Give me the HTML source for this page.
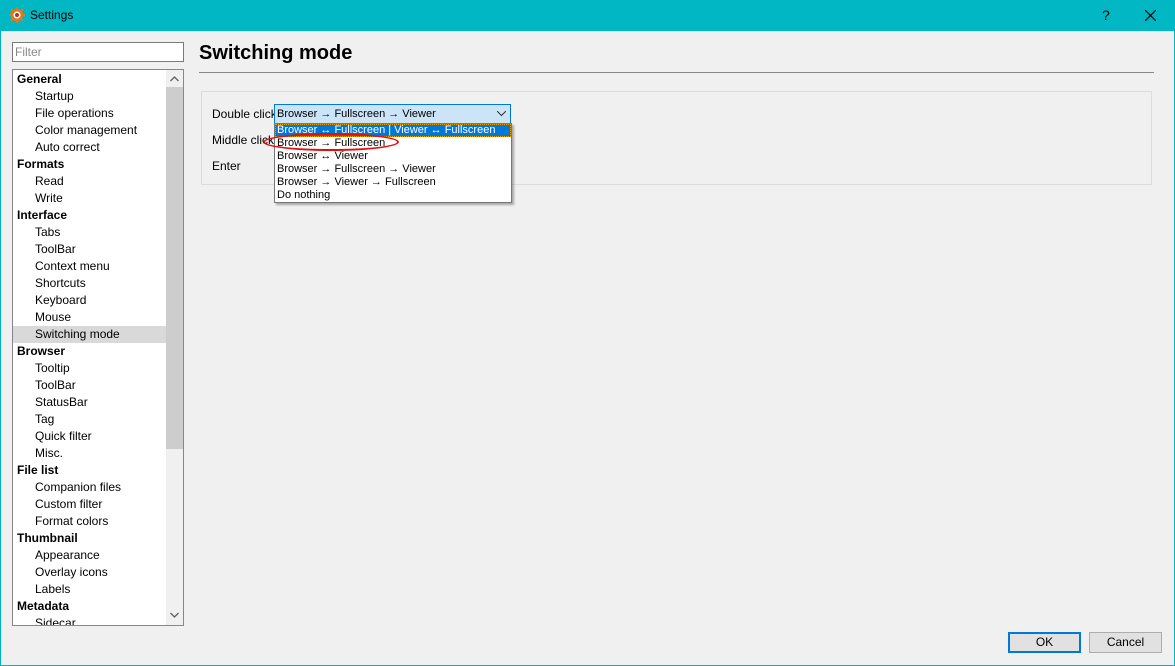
<!DOCTYPE html>
<html><head><style>
*{margin:0;padding:0;box-sizing:border-box}
body{width:1175px;height:666px;background:#f0f0f0;font-family:"Liberation Sans",sans-serif;font-size:12px;color:#000;position:relative;overflow:hidden}
.abs{position:absolute}
#title{left:0;top:0;width:1175px;height:31px;background:#00b7c3}
.tree div{height:17px;line-height:17px;white-space:nowrap}
.tree .h{font-weight:bold;padding-left:4px}
.tree .c{padding-left:22px}
.dd div{height:13px;line-height:13px;padding-left:2px;font-size:11px}
</style></head><body>
<div class="abs" style="left:0;top:0;width:1175px;height:666px;border:1px solid #00b4c0"></div>
<div class="abs" id="title">
<svg class="abs" style="left:9px;top:7px" width="16" height="16" viewBox="0 0 16 16"><circle cx="8" cy="8" r="6" fill="#e8771c"/><g stroke="#e8771c" stroke-width="2"><line x1="8" y1="0" x2="8" y2="16"/><line x1="0" y1="8" x2="16" y2="8"/><line x1="2" y1="2" x2="14" y2="14"/><line x1="14" y1="2" x2="2" y2="14"/></g><circle cx="8" cy="8" r="3.5" fill="#fff"/><circle cx="8" cy="8" r="2" fill="#c0301a"/></svg>
<div class="abs" style="left:30px;top:8px;font-size:12px">Settings</div>
<div class="abs" style="left:1102px;top:7px;font-size:14px">?</div>
<svg class="abs" style="left:1145px;top:10px" width="11" height="11"><path d="M0 0L11 11M11 0L0 11" stroke="#000" stroke-width="1.2"/></svg>
</div>
<div class="abs" style="left:12px;top:42px;width:172px;height:20px;border:1px solid #7a7a7a;background:#fff;color:#888;padding-left:2px;line-height:18px">Filter</div>
<div class="abs" style="left:12px;top:69px;width:172px;height:557px;border:1px solid #828790;background:#fff;overflow:hidden">
<div class="tree abs" style="left:0;top:1px;width:153px">
<div class="h">General</div><div class="c">Startup</div><div class="c">File operations</div><div class="c">Color management</div><div class="c">Auto correct</div>
<div class="h">Formats</div><div class="c">Read</div><div class="c">Write</div>
<div class="h">Interface</div><div class="c">Tabs</div><div class="c">ToolBar</div><div class="c">Context menu</div><div class="c">Shortcuts</div><div class="c">Keyboard</div><div class="c">Mouse</div><div class="c" style="background:#d9d9d9">Switching mode</div>
<div class="h">Browser</div><div class="c">Tooltip</div><div class="c">ToolBar</div><div class="c">StatusBar</div><div class="c">Tag</div><div class="c">Quick filter</div><div class="c">Misc.</div>
<div class="h">File list</div><div class="c">Companion files</div><div class="c">Custom filter</div><div class="c">Format colors</div>
<div class="h">Thumbnail</div><div class="c">Appearance</div><div class="c">Overlay icons</div><div class="c">Labels</div>
<div class="h">Metadata</div><div class="c">Sidecar</div>
</div>
<div class="abs" style="left:153px;top:0;width:17px;height:555px;background:#f0f0f0"></div>
<div class="abs" style="left:153px;top:17px;width:17px;height:362px;background:#cdcdcd"></div>
<svg class="abs" style="left:157px;top:6px" width="9" height="6"><path d="M0.5 5L4.5 1L8.5 5" stroke="#606060" stroke-width="1.3" fill="none"/></svg>
<svg class="abs" style="left:157px;top:542px" width="9" height="6"><path d="M0.5 1L4.5 5L8.5 1" stroke="#606060" stroke-width="1.3" fill="none"/></svg>
</div>
<div class="abs" style="left:199px;top:42px;font-size:20px;font-weight:bold">Switching mode</div>
<div class="abs" style="left:199px;top:72px;width:955px;height:1px;background:#888"></div>
<div class="abs" style="left:201px;top:91px;width:951px;height:94px;border:1px solid #dcdcdc"></div>
<div class="abs" style="left:212px;top:107px">Double click</div>
<div class="abs" style="left:212px;top:133px">Middle click</div>
<div class="abs" style="left:212px;top:159px">Enter</div>
<div class="abs" style="left:274px;top:104px;width:237px;height:20px;border:1px solid #0078d7;background:#cce4f7;line-height:18px;padding-left:2px;font-size:11px">Browser → Fullscreen → Viewer</div>
<svg class="abs" style="left:497px;top:111px" width="9" height="6"><path d="M0 0L4.5 4.5L9 0" stroke="#333" fill="none"/></svg>
<div class="abs dd" style="left:274px;top:123px;width:238px;height:80px;border:1px solid #777;background:#fff;box-shadow:2px 2px 2px rgba(0,0,0,.3)">
<div style="background:#0078d7;color:#fff;outline:1px dotted #f0a000;outline-offset:-1px">Browser ↔ Fullscreen | Viewer ↔ Fullscreen</div>
<div>Browser → Fullscreen</div><div>Browser ↔ Viewer</div><div>Browser → Fullscreen → Viewer</div><div>Browser → Viewer → Fullscreen</div><div>Do nothing</div>
</div>
<div class="abs" style="left:263px;top:133px;width:136px;height:18px;border:2px solid #e01010;border-radius:50%"></div>
<div class="abs" style="left:1008px;top:632px;width:73px;height:21px;border:1px solid #0078d7;background:#e1e1e1;text-align:center;line-height:19px;box-shadow:inset 0 0 0 1px #0078d7">OK</div>
<div class="abs" style="left:1089px;top:632px;width:73px;height:21px;border:1px solid #adadad;background:#e1e1e1;text-align:center;line-height:19px">Cancel</div>
</body></html>
